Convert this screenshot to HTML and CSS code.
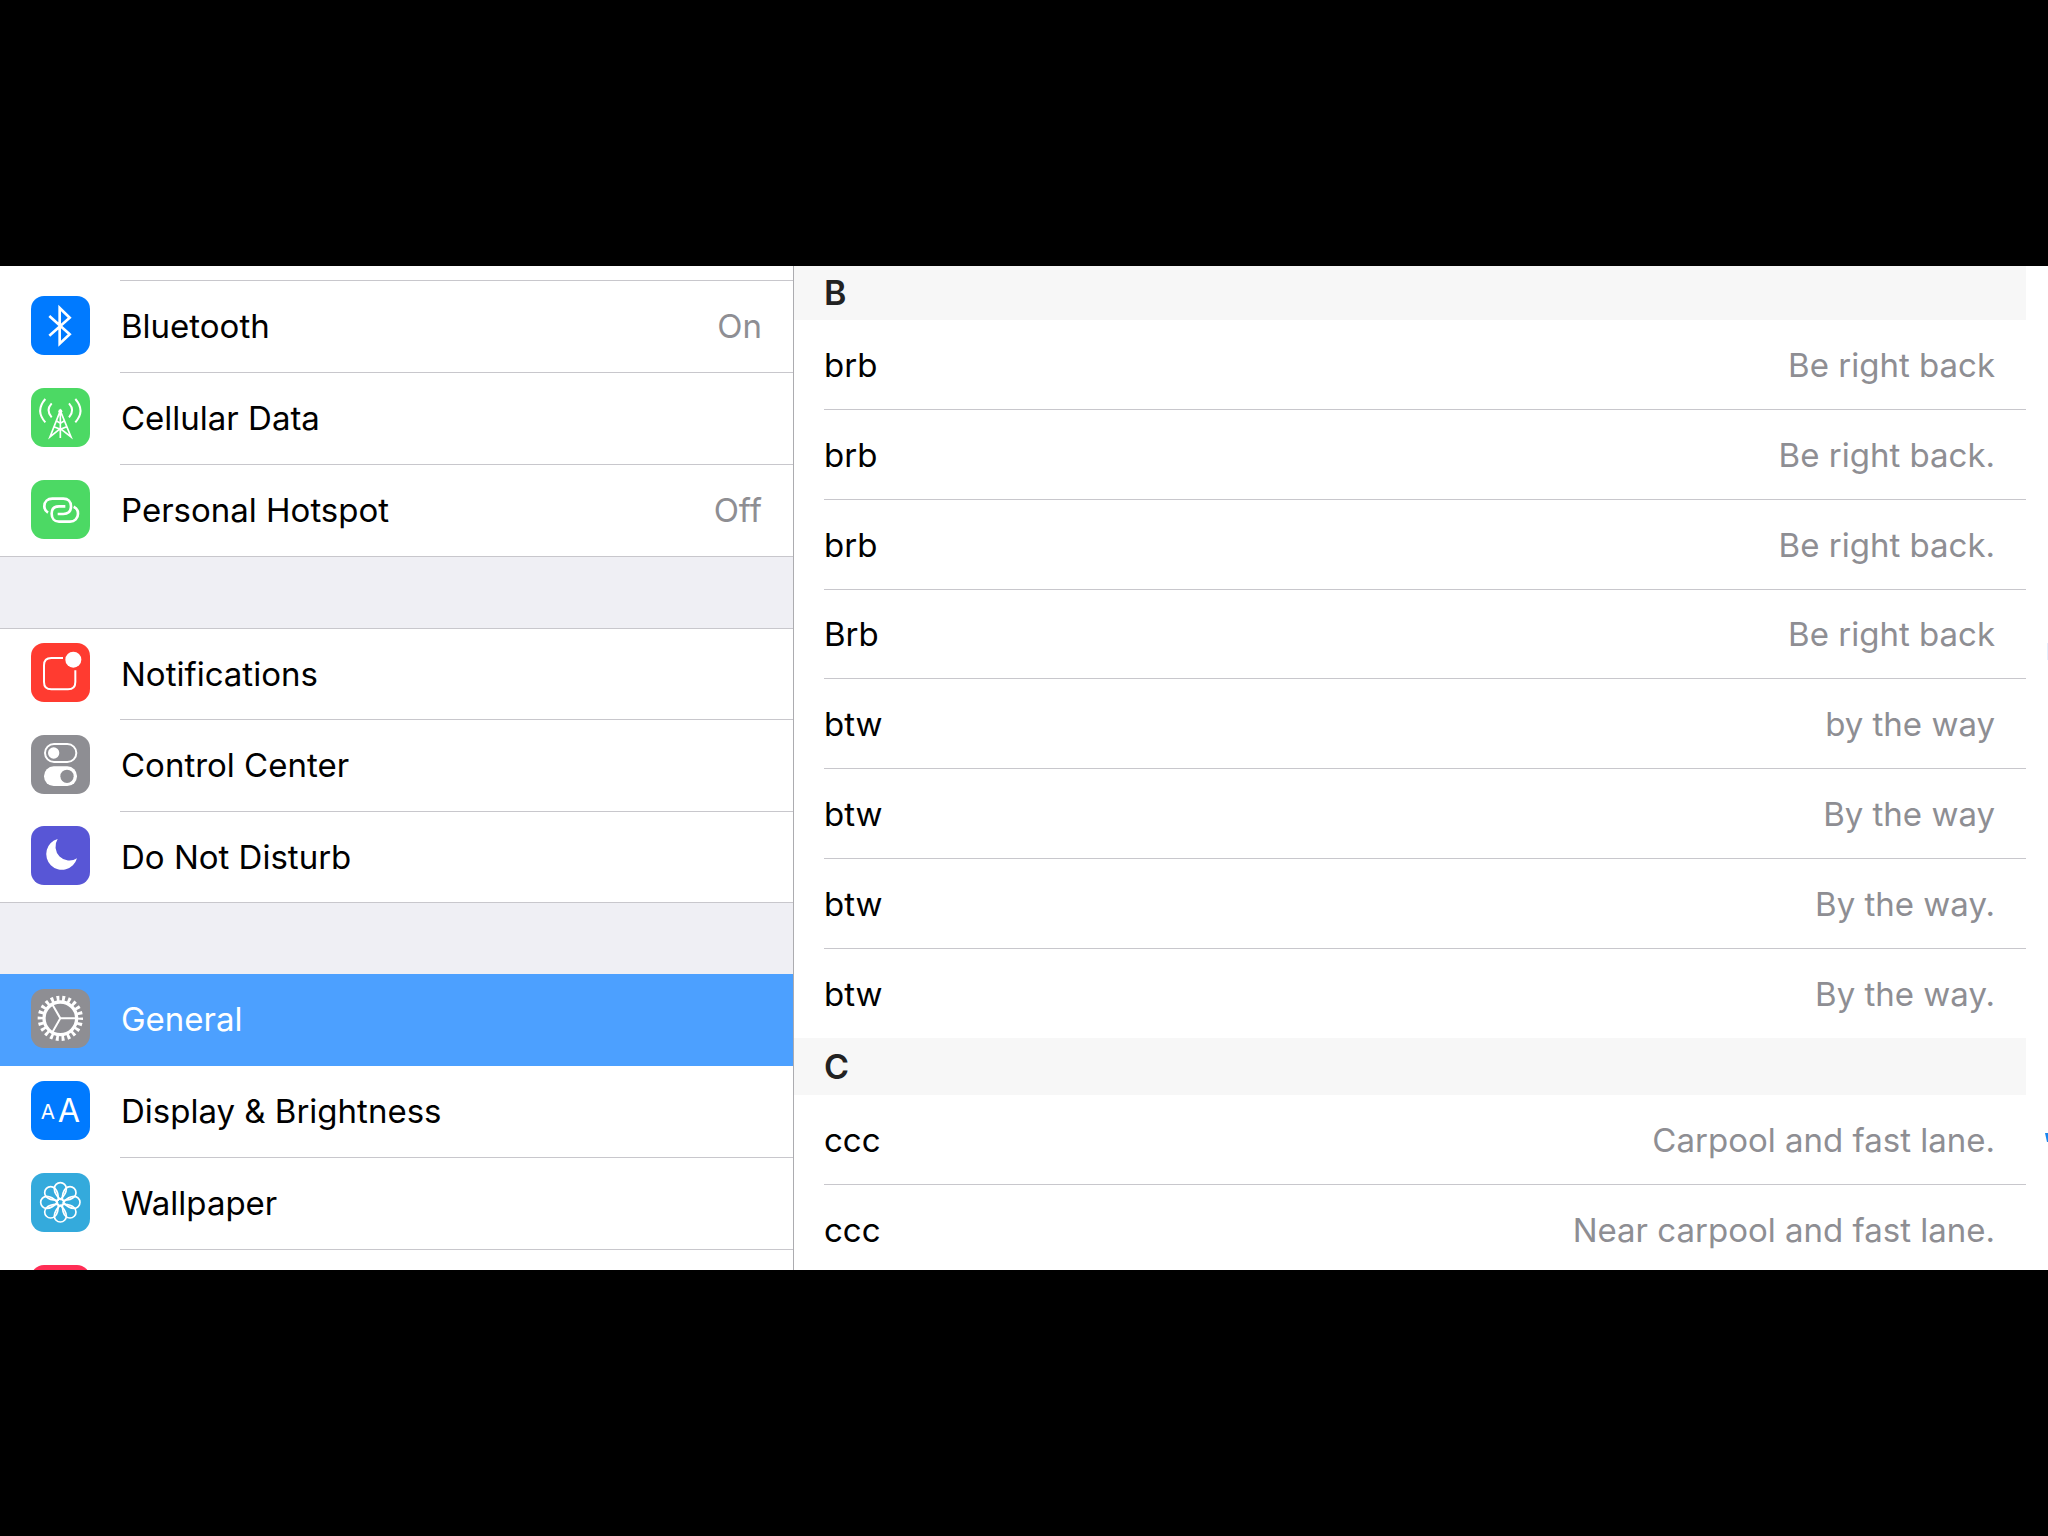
FILE: index.html
```html
<!DOCTYPE html>
<html lang="en">
<head>
<meta charset="utf-8">
<title>Settings</title>
<link rel="stylesheet" href="styles.css">
</head>
<body>
<main class="settings">
  <nav class="sidebar" aria-label="Settings">
    <div class="group group-scrolled">
      <a class="row" href="#bluetooth">
        <svg class="icon blue" viewBox="0 0 177 177" aria-hidden="true"><path class="line" stroke-width="8" d="M55 60L116 115L86 143V36L116 65L55 119"/></svg>
        <span class="label">Bluetooth</span><span class="value">On</span>
      </a>
      <a class="row" href="#cellular">
        <svg class="icon green" viewBox="0 0 177 177" aria-hidden="true"><path class="line" stroke-width="6" d="M43 33Q12 68 43 103M62 46Q43 67 62 88M133 33Q164 68 133 103M114 46Q133 67 114 88"/><path class="line" stroke-width="5" d="M88 68L57 147L88 122L120 147ZM88 68V150M77 99L88 106L99 99M69 116L88 124L107 116"/><circle class="fill" cx="88" cy="70" r="6"/></svg>
        <span class="label">Cellular Data</span>
      </a>
      <a class="row" href="#hotspot">
        <svg class="icon green" viewBox="0 0 177 177" aria-hidden="true"><path class="line" stroke-width="8" d="M51 98C43 93 40 87 40 79C40 65 50 56 64 56H97C111 56 120 65 120 79C120 94 111 102 97 102H80M128 80C137 84 141 91 141 101C141 115 131 125 117 125H84C70 125 62 115 62 101C62 87 70 79 84 79H103"/></svg>
        <span class="label">Personal Hotspot</span><span class="value">Off</span>
      </a>
    </div>
    <div class="group group-ruled">
      <a class="row" href="#notifications">
        <svg class="icon red" viewBox="0 0 177 177" aria-hidden="true"><path class="line" stroke-width="6" d="M96 45H61Q39 45 39 67V117Q39 139 61 139H111Q133 139 133 117V82"/><circle class="fill" cx="127" cy="50" r="24"/></svg>
        <span class="label">Notifications</span>
      </a>
      <a class="row" href="#control-center">
        <svg class="icon gray" viewBox="0 0 177 177" aria-hidden="true"><rect class="line" stroke-width="6" x="42" y="27" width="94" height="54" rx="27"/><circle class="fill" cx="68" cy="54" r="17"/><rect class="fill" x="39" y="94" width="99" height="59" rx="29"/><circle class="hole" cx="108" cy="124" r="20"/></svg>
        <span class="label">Control Center</span>
      </a>
      <a class="row" href="#do-not-disturb">
        <svg class="icon purple" viewBox="0 0 177 177" aria-hidden="true"><path class="fill" d="M80 39A47 47 0 1 0 138 97A42 42 0 0 1 80 39Z"/></svg>
        <span class="label">Do Not Disturb</span>
      </a>
    </div>
    <div class="group">
      <a class="row selected" href="#general" aria-current="page">
        <svg class="icon gray" viewBox="0 0 177 177" aria-hidden="true"><circle class="line" stroke-width="10" cx="88" cy="88" r="49"/><circle class="line" stroke-width="16" cx="88" cy="88" r="60" pathLength="440" stroke-dasharray="10 10" stroke-dashoffset="5"/><path class="line" stroke-width="6" d="M88 88H134M88 88L65 48M88 88L65 128"/></svg>
        <span class="label">General</span>
      </a>
      <a class="row" href="#display">
        <svg class="icon blue" viewBox="0 0 177 177" aria-hidden="true"><text class="fill glyph" x="29" y="113" font-size="62">A</text><text class="fill glyph" x="80" y="123" font-size="97">A</text></svg>
        <span class="label">Display &amp; Brightness</span>
      </a>
      <a class="row" href="#wallpaper">
        <svg class="icon sky" viewBox="0 0 177 177" aria-hidden="true"><defs><path id="petal" d="M0 -9C-9 -17 -18 -27 -18 -41A18 18 0 0 1 18 -41C18 -27 9 -17 0 -9Z"/></defs><g class="line" stroke-width="5" transform="translate(88 88)"><use href="#petal"/><use href="#petal" transform="rotate(45)"/><use href="#petal" transform="rotate(90)"/><use href="#petal" transform="rotate(135)"/><use href="#petal" transform="rotate(180)"/><use href="#petal" transform="rotate(225)"/><use href="#petal" transform="rotate(270)"/><use href="#petal" transform="rotate(315)"/><circle r="10"/></g></svg>
        <span class="label">Wallpaper</span>
      </a>
      <a class="row" href="#sounds" aria-label="More settings">
        <svg class="icon pink" viewBox="0 0 177 177" aria-hidden="true"></svg>
        <span class="label"></span>
      </a>
    </div>
  </nav>
  <section class="detail" aria-label="Text replacement">
    <div class="shortcuts">
      <h2 class="letter letter-pinned">B</h2>
      <ul class="list">
        <li class="entry"><span>brb</span><span class="phrase">Be right back</span></li>
        <li class="entry"><span>brb</span><span class="phrase">Be right back.</span></li>
        <li class="entry"><span>brb</span><span class="phrase">Be right back.</span></li>
        <li class="entry"><span>Brb</span><span class="phrase">Be right back</span></li>
        <li class="entry"><span>btw</span><span class="phrase">by the way</span></li>
        <li class="entry"><span>btw</span><span class="phrase">By the way</span></li>
        <li class="entry"><span>btw</span><span class="phrase">By the way.</span></li>
        <li class="entry"><span>btw</span><span class="phrase">By the way.</span></li>
      </ul>
      <h2 class="letter">C</h2>
      <ul class="list">
        <li class="entry"><span>ccc</span><span class="phrase">Carpool and fast lane.</span></li>
        <li class="entry"><span>ccc</span><span class="phrase">Near carpool and fast lane.</span></li>
      </ul>
    </div>
    <div class="gutter" aria-hidden="true">
      <svg class="index-edge" viewBox="0 0 3 520"><path fill="#e4effc" d="M2 0H3V17H2Z"/><path fill="#1a86ee" d="M0 490H3V499H2Z"/></svg>
    </div>
  </section>
</main>
</body>
</html>
```
FILE: styles.css
```css
*,
*::before {
  box-sizing: border-box;
}

body {
  margin: 0;
  height: 100vh;
  padding: 266px 0;
  overflow: hidden;
  background: #000;
  color: #000;
  font: 33px/44px Inter, "Liberation Sans", sans-serif;
}

.settings {
  display: grid;
  grid-template-columns: 794fr 1254fr;
  height: 100%;
  overflow: hidden;
  background: #fff;
}

/* Sidebar */
.sidebar {
  display: flex;
  flex-direction: column;
  gap: 71px;
  min-height: 0;
  overflow: hidden;
  border-right: 1px solid #acacb0;
  background: #efeff4;
}

.group {
  flex: none;
  background: #fff;
}

.group-scrolled::before {
  content: "";
  display: block;
  height: 15px;
  margin-left: 120px;
  border-bottom: 1px solid #c8c7cc;
}

.group-ruled {
  border-top: 1px solid #c8c7cc;
}

.row {
  display: grid;
  grid-template-columns: 59px 1fr;
  grid-auto-flow: column;
  column-gap: 31px;
  align-items: center;
  height: 92px;
  padding: 0 0 2px 31px;
  color: inherit;
  text-decoration: none;
  background: linear-gradient(#c8c7cc, #c8c7cc) 120px 100% / 100% 1px no-repeat;
}

.group-ruled .row:first-child,
.group-ruled .row:last-child {
  height: 91px;
}

.row:last-child {
  background-position: 0 100%;
}

.row.selected {
  background: #4ca0ff;
  color: #fff;
}

.value {
  padding-right: 31px;
  color: #8e8e93;
}

.icon {
  display: block;
  width: 59px;
  height: 59px;
  margin-bottom: 2px;
  border-radius: 13px;
  fill: none;
}

.blue { background: #007aff; }
.green { background: #4cd964; }
.red { background: #ff3b30; }
.gray { background: #8e8e93; }
.purple { background: #5856d6; }
.sky { background: #34aadc; }
.pink { background: #ff2d55; }

.line {
  fill: none;
  stroke: #fff;
}

.fill { fill: #fff; }
.hole { fill: #8e8e93; }
.glyph { font-family: Inter, sans-serif; }

/* Shortcut list */
.detail {
  display: grid;
  grid-template-columns: 1fr 22px;
  min-width: 0;
  min-height: 0;
  overflow: hidden;
}

.letter {
  display: flex;
  align-items: center;
  height: 57px;
  margin: 0;
  padding-left: 30px;
  background: #f7f7f7;
  color: #222;
  font-size: 34px;
  font-weight: 600;
}

.letter-pinned {
  height: 54px;
}

.list {
  margin: 0;
  padding: 0 0 0 30px;
  list-style: none;
}

.entry {
  display: flex;
  align-items: center;
  justify-content: space-between;
  height: 90px;
  padding-right: 31px;
  border-bottom: 1px solid #c8c7cc;
}

.entry:nth-child(4n) {
  height: 89px;
}

.entry:last-child {
  border-bottom: 0;
}

.phrase {
  color: #8e8e93;
}

.gutter {
  display: flex;
  justify-content: flex-end;
  padding-top: 377px;
}

.index-edge {
  width: 3px;
  height: 520px;
}
```
